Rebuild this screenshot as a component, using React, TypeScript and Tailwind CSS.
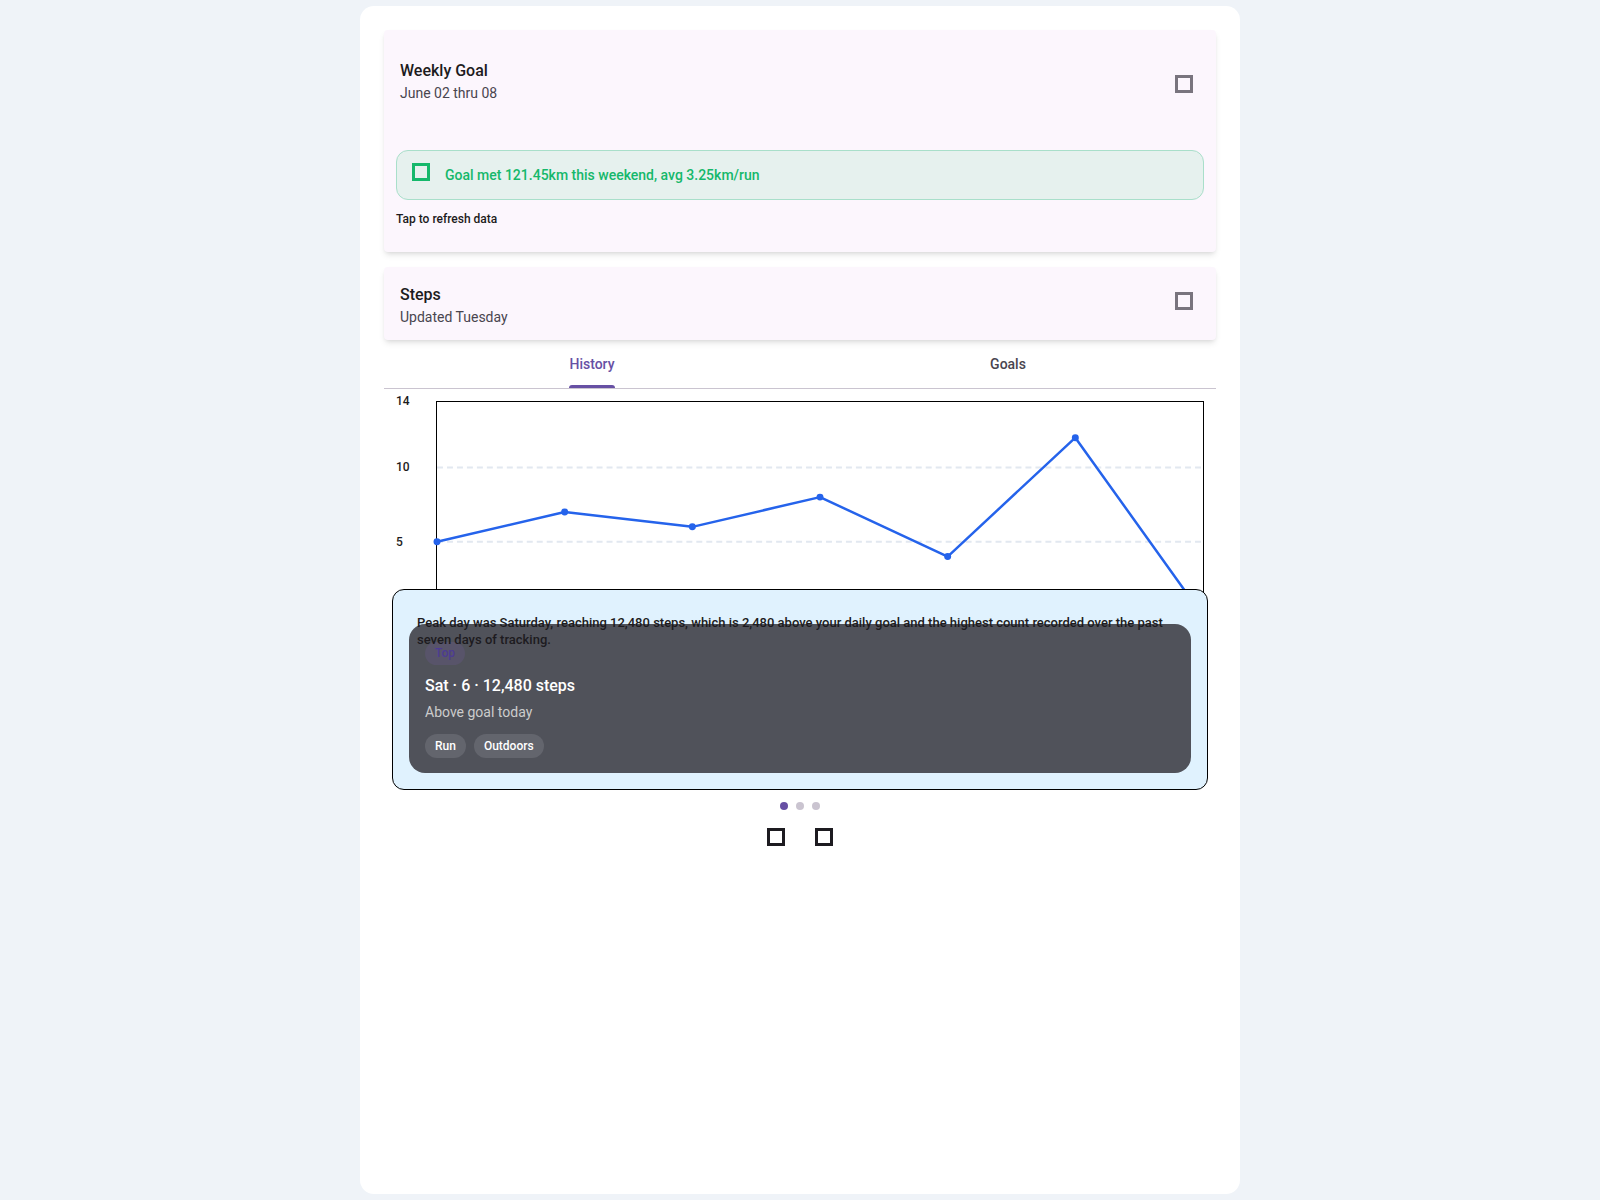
import React from "react";

const steps = [5, 7, 6, 8, 4, 12, 0];
const PLOT_W = 768;
const PLOT_H = 216;
const MAX = 14.4;

const px = (i: number) => (i * PLOT_W) / (steps.length - 1);
const py = (v: number) => PLOT_H - (v / MAX) * PLOT_H;

// hollow square glyph, as drawn in the screenshot
const BoxIcon = ({ className }: { className?: string }) => (
  <svg viewBox="0 0 18 18" className={className} fill="none" stroke="currentColor" strokeWidth={3}>
    <rect x="1.5" y="1.5" width="15" height="15" />
  </svg>
);

const yTicks = [
  { label: "14", v: 14.4 },
  { label: "10", v: 10 },
  { label: "5", v: 5 },
  { label: "0", v: 0 },
];

const StepsChart = () => {
  const points = steps.map((v, i) => `${px(i)},${py(v)}`).join(" ");
  return (
    <div className="flex px-3 pt-3">
      {/* Y axis labels */}
      <div className="relative h-[216px] w-10 shrink-0">
        {yTicks.map((t) => (
          <span
            key={t.label}
            className="absolute left-0 text-xs font-medium leading-4 text-[#1D1B20]"
            style={{ top: py(t.v) - 8 }}
          >
            {t.label}
          </span>
        ))}
      </div>

      {/* Plot */}
      <div className="h-[216px] flex-1 border border-black">
        <svg
          viewBox={`0 0 ${PLOT_W} ${PLOT_H}`}
          preserveAspectRatio="none"
          className="h-full w-full overflow-visible"
        >
          {[10, 5].map((v) => (
            <line
              key={v}
              x1={0}
              x2={PLOT_W}
              y1={py(v)}
              y2={py(v)}
              stroke="#E2E8F0"
              strokeWidth={2}
              strokeDasharray="6 4"
            />
          ))}
          <polyline points={points} fill="none" stroke="#2563EB" strokeWidth={2.5} strokeLinejoin="round" />
          {steps.map((v, i) => (
            <circle key={i} cx={px(i)} cy={py(v)} r={3.5} fill="#2563EB" />
          ))}
        </svg>
      </div>
    </div>
  );
};

export default function App() {
  return (
    <div className="min-h-screen bg-[#EFF3F8] py-[6px] font-[family-name:Roboto,'Noto_Sans',sans-serif]">
      <div className="mx-auto min-h-[1188px] w-[880px] rounded-[14px] bg-white p-6">
        {/* Weekly goal card */}
        <div className="rounded bg-[#FCF6FD] shadow-md">
          <div className="flex items-center justify-between py-[29px] pl-4 pr-[23px]">
            <div>
              <h2 className="text-base font-medium leading-6 text-[#1D1B20]">Weekly Goal</h2>
              <p className="text-sm leading-5 text-[#49454F]">June 02 thru 08</p>
            </div>
            <BoxIcon className="mt-[5px] h-[18px] w-[18px] text-[#79747E]" />
          </div>
          <div className="px-3 pb-[25px] pt-[18px]">
            <div className="flex items-start gap-[15px] rounded-xl border border-[#A9DFCA] bg-[#E6F1EE] px-[15px] py-[14px]">
              <BoxIcon className="-mt-[2px] h-[18px] w-[18px] shrink-0 text-[#15B86B]" />
              <p className="text-sm font-medium leading-5 text-[#15B86B]">
                Goal met 121.45km this weekend, avg 3.25km/run
              </p>
            </div>
            <p className="mt-[11px] text-xs font-medium leading-4 text-[#1D1B20]">Tap to refresh data</p>
          </div>
        </div>

        {/* Steps card */}
        <div className="mt-[15px] rounded bg-[#FCF6FD] shadow-md">
          <div className="flex items-center justify-between pb-[13px] pl-4 pr-[23px] pt-4">
            <div>
              <h2 className="text-base font-medium leading-6 text-[#1D1B20]">Steps</h2>
              <p className="text-sm leading-5 text-[#49454F]">Updated Tuesday</p>
            </div>
            <BoxIcon className="mb-2 h-[18px] w-[18px] text-[#79747E]" />
          </div>
        </div>

        {/* Tabs */}
        <div className="grid grid-cols-2 border-b border-[#CAC4D0]">
          <button className="flex h-12 justify-center">
            <span className="relative flex h-full items-center text-sm font-medium text-[#6750A4]">
              History
              <span className="absolute bottom-0 left-0 right-0 h-[3px] rounded-t-full bg-[#6750A4]" />
            </span>
          </button>
          <button className="flex h-12 items-center justify-center text-sm font-medium text-[#49454F]">
            Goals
          </button>
        </div>

        <StepsChart />

        {/* Selected day detail */}
        <div className="relative z-10 mx-2 -mt-[28px] rounded-xl border border-black bg-[#E0F2FE] px-4 pb-4 pt-6">
          <p className="relative z-10 px-2 text-[13px] font-medium leading-[17px] text-[#1D1B20]">
            Peak day was Saturday, reaching 12,480 steps, which is 2,480 above your daily goal and the highest count
            recorded over the past seven days of tracking.
          </p>
          <div className="-mt-[24px] rounded-2xl bg-[#50525A] px-4 pb-[15px] pt-4">
            <span className="inline-flex h-[23px] items-center rounded-full bg-[#58546A] px-2.5 text-xs font-medium text-[#4D3B93]">
              Top
            </span>
            <p className="mt-[9px] text-base font-medium leading-6 text-white">Sat · 6 · 12,480 steps</p>
            <p className="mt-1 text-sm leading-5 text-[#CCCCCC]">Above goal today</p>
            <div className="mt-3 flex gap-2">
              <span className="inline-flex h-6 items-center rounded-full bg-[#63656D] px-2.5 text-xs font-medium text-white">
                Run
              </span>
              <span className="inline-flex h-6 items-center rounded-full bg-[#63656D] px-2.5 text-xs font-medium text-white">
                Outdoors
              </span>
            </div>
          </div>
        </div>

        {/* Pager */}
        <div className="mt-3 flex justify-center gap-2">
          <span className="h-2 w-2 rounded-full bg-[#6750A4]" />
          <span className="h-2 w-2 rounded-full bg-[#CAC4D0]" />
          <span className="h-2 w-2 rounded-full bg-[#CAC4D0]" />
        </div>
        <div className="mt-[3px] flex justify-center">
          <button className="flex h-12 w-12 items-center justify-center text-[#1D1B20]">
            <BoxIcon className="h-[18px] w-[18px]" />
          </button>
          <button className="flex h-12 w-12 items-center justify-center text-[#1D1B20]">
            <BoxIcon className="h-[18px] w-[18px]" />
          </button>
        </div>
      </div>
    </div>
  );
}
